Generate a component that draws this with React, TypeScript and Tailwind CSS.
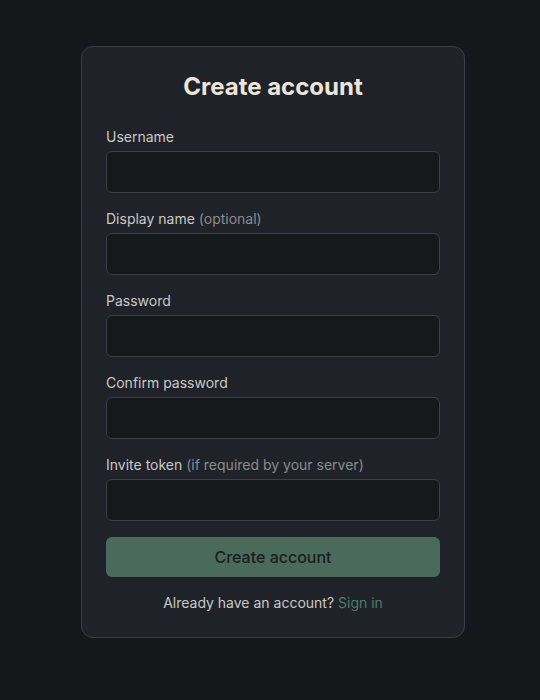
import { useState } from 'react';

const fields = [
  { id: 'username', label: 'Username', hint: '', type: 'text' },
  { id: 'display', label: 'Display name', hint: '(optional)', type: 'text' },
  { id: 'password', label: 'Password', hint: '', type: 'password' },
  { id: 'confirm', label: 'Confirm password', hint: '', type: 'password' },
  { id: 'invite', label: 'Invite token', hint: '(if required by your server)', type: 'text' },
];

export default function App() {
  const [values, setValues] = useState<Record<string, string>>({});

  return (
    <div
      className="min-h-[700px] w-full bg-[#15181b] flex justify-center pt-[46px] pl-[6px]"
      style={{ fontFamily: 'Inter, "Liberation Sans", sans-serif' }}
    >
      <form
        className="w-[384px] h-fit rounded-xl border border-[#3a3e46] bg-[#1f2229] px-6 pt-6 pb-6 flex flex-col"
        onSubmit={(e) => e.preventDefault()}
      >
        <h1 className="text-center text-2xl leading-8 font-bold text-[#ece6d9] mb-6">Create account</h1>

        <div className="flex flex-col gap-4">
          {fields.map((f) => (
            <div key={f.id} className="flex flex-col gap-1">
              <label htmlFor={f.id} className="text-sm leading-5 text-[#c9c9c7]">
                {f.label}
                {f.hint && <span className="text-[#8b8c8e]"> {f.hint}</span>}
              </label>
              <input
                id={f.id}
                type={f.type}
                value={values[f.id] || ''}
                onChange={(e) => setValues({ ...values, [f.id]: e.target.value })}
                className="h-[42px] w-full rounded-md border border-[#3b3f47] bg-[#16191c] px-3 text-sm text-[#e5e5e5] outline-none"
              />
            </div>
          ))}

          <button
            type="submit"
            className="h-10 w-full rounded-md bg-[#4a6b5b] text-base font-medium text-[#1a1d21]"
          >
            Create account
          </button>
        </div>

        <p className="mt-4 text-center text-sm leading-5 text-[#c9c9c7]">
          Already have an account? <a className="text-[#4f7c67]" href="#">Sign in</a>
        </p>
      </form>
    </div>
  );
}
